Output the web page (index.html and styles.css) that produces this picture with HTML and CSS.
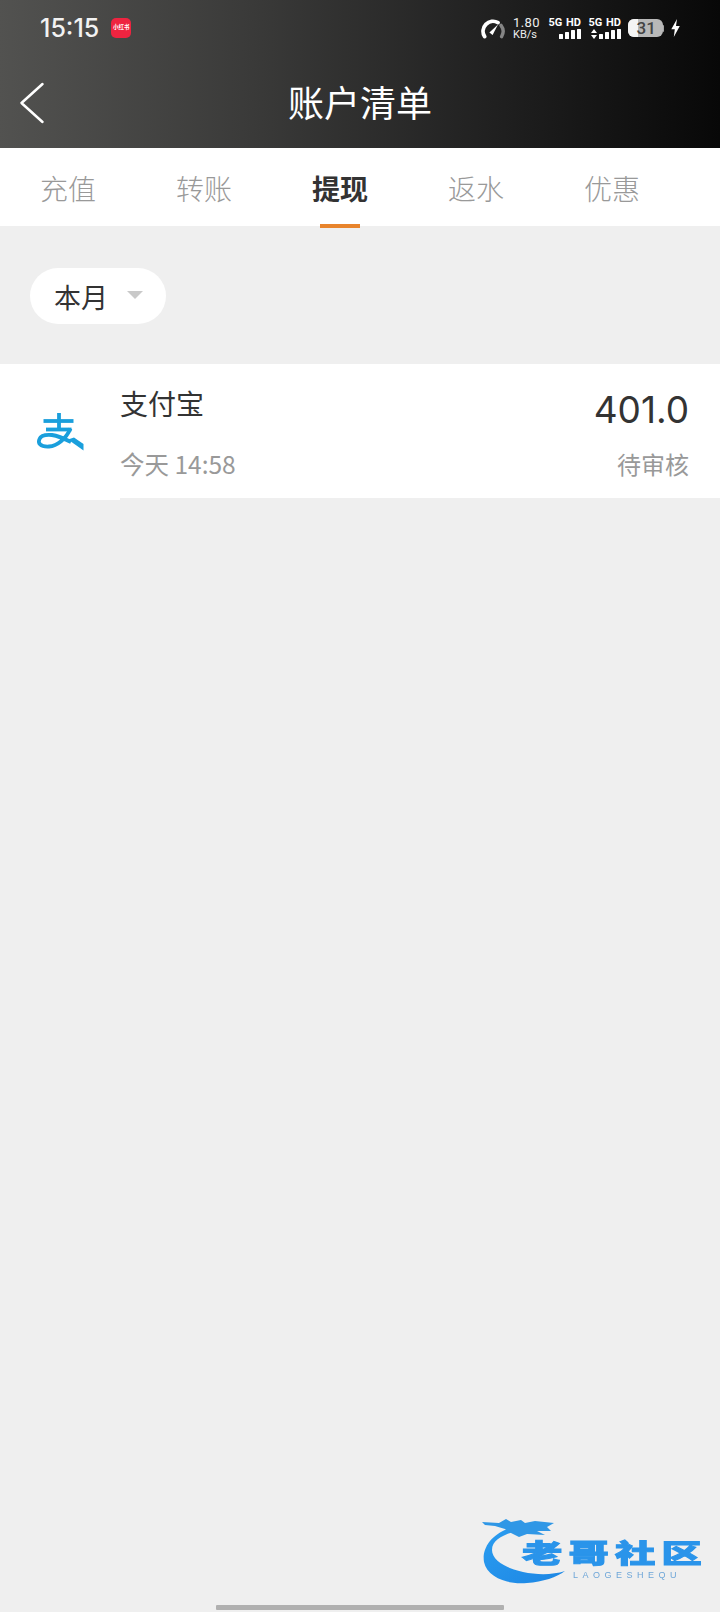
FILE: index.html
```html
<!DOCTYPE html>
<html lang="zh">
<head>
<meta charset="utf-8">
<title>账户清单</title>
<link rel="stylesheet" href="styles.css">
</head>
<body>
<div class="page">
  <header class="header">
    <div class="status">
      <div class="status-left">
        <span class="clock">15:15</span>
        <span class="app-badge"><span class="app-badge-text">小红书</span></span>
      </div>
      <div class="status-right">
        <svg class="gauge" width="24" height="21" viewBox="0 0 24 21">
          <path d="M3.6 18.6 A10 10 0 0 1 17 4.6" fill="none" stroke="#fff" stroke-width="3.8" stroke-linecap="round"/>
          <path d="M20 7.4 A10 10 0 0 1 20.6 18.6" fill="none" stroke="#858585" stroke-width="3.4" stroke-linecap="round"/>
          <path d="M8.4 14.4 L17 6.4 L11.6 17 Z" fill="#fff"/>
        </svg>
        <div class="speed"><span class="speed-num">1.80</span><span class="speed-unit">KB/s</span></div>
        <div class="sim">
          <span class="sim-label">5G HD</span>
          <div class="bars"><i class="b1"></i><i class="b2"></i><i class="b3"></i><i class="b4"></i></div>
        </div>
        <div class="sim sim-second">
          <span class="sim-label">5G HD</span>
          <div class="bars">
            <svg class="updown" width="6" height="10" viewBox="0 0 6 10"><path d="M3 0 L6 4 H0 Z M0 6 H6 L3 10 Z" fill="#fff"/></svg>
            <i class="b1"></i><i class="b2"></i><i class="b3"></i><i class="b4"></i>
          </div>
        </div>
        <div class="battery">
          <div class="battery-body"><span class="battery-level"></span><span class="battery-num">31</span></div>
          <span class="battery-nub"></span>
        </div>
        <svg class="bolt" width="9" height="18" viewBox="0 0 9 18"><path d="M6 0 L0.3 10.2 H3.8 L2.8 18 L8.8 7 H5 Z" fill="#fff"/></svg>
      </div>
    </div>
    <div class="nav">
      <svg class="back" width="26" height="42" viewBox="0 0 26 42"><path d="M23.5 2 L2.5 21 L23.5 40" fill="none" stroke="#fff" stroke-width="2.5" stroke-linecap="round" stroke-linejoin="round"/></svg>
      <h1 class="title">账户清单</h1>
    </div>
  </header>

  <nav class="tabs">
    <a class="tab">充值</a>
    <a class="tab">转账</a>
    <a class="tab active">提现</a>
    <a class="tab">返水</a>
    <a class="tab">优惠</a>
  </nav>

  <div class="filter-wrap">
    <div class="pill"><span class="pill-text">本月</span><span class="caret"></span></div>
  </div>

  <section class="row">
    <div class="row-icon">
      <svg width="60" height="50" viewBox="0 0 60 50">
        <g fill="none" stroke="#1a9fdc" stroke-width="3.8">
          <path d="M13.5 16 H43.5"/>
          <path d="M29 8 V24"/>
          <path d="M16 24.5 H41.5"/>
          <path d="M40.5 23.5 C36 34 27 41 19 41.5 C10 42 7.5 38 9.5 34 C11 30 16 29.5 22 30 C29 31 35 34 41 37"/>
        </g>
        <path d="M38 34.5 L44 32.5 L53.5 39 L53.5 45.5 Z" fill="#1a9fdc"/>
      </svg>
    </div>
    <div class="row-body">
      <div class="row-main">
        <span class="row-name">支付宝</span>
        <span class="row-amount">401.0</span>
      </div>
      <div class="row-sub">
        <span class="row-time">今天 14:58</span>
        <span class="row-status">待审核</span>
      </div>
    </div>
  </section>

  <div class="watermark">
    <svg class="dragon" width="120" height="80" viewBox="0 0 120 80">
      <defs>
        <linearGradient id="dg" x1="0" y1="0" x2="1" y2="1"><stop offset="0" stop-color="#2b9df0"/><stop offset="1" stop-color="#1c86e4"/></linearGradient>
      </defs>
      <path d="M34 18 C14 26 7 40 9 52 C12 68 35 75 52 73 C68 72 82 67 90 61 C78 65 62 65 48 62 C30 58 17 50 17 40 C17 31 26 26 38 22 Z" fill="url(#dg)"/>
      <path d="M7 12 L24 13 L31 9 L36 12 L46 10 L50 13 L60 11 L79 13 L72 17 L76 21 L62 21 L70 25 L52 24 L44 27 L36 23 L30 19 L20 16 L10 15 Z" fill="#2f97e6"/>
    </svg>
    <span class="wm-name">老哥社区</span>
    <span class="wm-latin">LAOGESHEQU</span>
  </div>
  <div class="home-bar"></div>
</div>
</body>
</html>
```

FILE: styles.css
```css
* { box-sizing: border-box; margin: 0; padding: 0; }
html, body { width: 720px; height: 1612px; overflow: hidden; }
body {
  background: #efefef;
  font-family: "Noto Sans CJK SC", "Noto Sans", sans-serif;
}
.page { position: relative; width: 720px; height: 1612px; display: flex; flex-direction: column; background: #efefef; }

.header {
  height: 148px;
  flex: none;
  background: linear-gradient(90deg, #525250 0%, #3a3a39 35%, #1f1f1f 70%, #080808 100%);
  color: #fff;
  display: flex;
  flex-direction: column;
}
.status {
  height: 56px;
  display: flex;
  justify-content: space-between;
  align-items: center;
  padding: 0 40px;
}
.status-left { display: flex; align-items: center; gap: 12px; }
.clock { font-family: Inter, Roboto, sans-serif; font-size: 25px; font-weight: 500; color: #f2f2f2; }
.app-badge {
  width: 20px; height: 20px; border-radius: 5px; background: #ee2440;
  display: flex; align-items: center; justify-content: center; overflow: hidden;
}
.app-badge-text { font-size: 5.5px; line-height: 1; color: #fff; white-space: nowrap; font-weight: 700; }
.status-right { display: flex; align-items: center; }
.gauge { margin-right: 8px; flex: none; }
.speed { display: flex; flex-direction: column; width: 24px; font-family: Roboto, sans-serif; color: #eee; line-height: 1; }
.speed-num { font-size: 13px; line-height: 12px; letter-spacing: .4px; white-space: nowrap; }
.speed-unit { font-size: 11px; line-height: 10px; margin-top: 1px; white-space: nowrap; }
.sim { display: flex; flex-direction: column; align-items: flex-end; margin-left: 12px; width: 32px; }
.sim-second { margin-left: 8px; }
.sim-label { font-family: Roboto, sans-serif; font-size: 11px; font-weight: 700; line-height: 10px; white-space: nowrap; word-spacing: 1px; }
.bars { display: flex; align-items: flex-end; gap: 2.4px; height: 10px; margin-top: 1px; }
.bars i { display: block; width: 3.6px; background: #fff; border-radius: .5px; }
.bars .b1 { height: 5px; }
.bars .b2 { height: 6.5px; }
.bars .b3 { height: 8.5px; }
.bars .b4 { height: 10px; }
.updown { margin-right: 0; }
.battery { width: 36px; height: 18px; margin-left: 7px; display: flex; align-items: center; }
.battery-body {
  position: relative;
  width: 34.5px; height: 18px;
  border-radius: 6px; background: #b8b8b8; overflow: hidden;
  display: flex; align-items: center; justify-content: center;
}
.battery-nub { width: 1.5px; height: 7px; background: #a5a5a5; border-radius: 0 1px 1px 0; }
.battery-level { position: absolute; left: 0; top: 0; bottom: 0; width: 10px; background: #f4f4f4; }
.battery-num { position: relative; font-family: Roboto, sans-serif; font-size: 17px; font-weight: 500; color: #444; line-height: 1; padding-left: 2px; }
.bolt { margin-left: 7px; flex: none; }

.nav {
  position: relative;
  flex: 1;
  display: flex;
  align-items: center;
  justify-content: center;
  padding-bottom: 2px;
}
.back { position: absolute; left: 19px; top: 26px; }
.title { font-size: 36px; font-weight: 400; line-height: 1; color: #fff; }

.tabs {
  height: 78px;
  flex: none;
  background: #fff;
  display: flex;
}
.tab {
  position: relative;
  width: 136px;
  display: flex;
  align-items: center;
  justify-content: center;
  padding-top: 2px;
  font-size: 28px;
  font-weight: 300;
  color: #999;
  line-height: 1;
}
.tab.active { color: #333; font-weight: 700; }
.tab.active::after {
  content: "";
  position: absolute;
  left: 48px; width: 40px; bottom: -2px; height: 4px;
  background: #e8842c;
}

.filter-wrap { padding: 42px 30px 40px; flex: none; }
.pill {
  width: 136px; height: 56px; border-radius: 28px; background: #fff;
  display: flex; align-items: center; padding-left: 24px;
}
.pill-text { font-size: 27px; color: #333; line-height: 1; }
.caret {
  width: 0; height: 0; margin-left: 19px; margin-top: -2px;
  border-left: 8px solid transparent; border-right: 8px solid transparent; border-top: 8px solid #c9c9c9;
}

.row { height: 136px; flex: none; background: #fff; display: flex; }
.row-icon { width: 120px; flex: none; display: flex; align-items: center; justify-content: center; padding-bottom: 4px; }
.row-body {
  flex: 1; padding: 22px 31px 0 0; display: flex; flex-direction: column;
  border-bottom: 2px solid #efefef;
}
.row-main { display: flex; justify-content: space-between; align-items: center; height: 44px; }
.row-sub { display: flex; justify-content: space-between; align-items: center; height: 34px; margin-top: 17px; }
.row-name { font-size: 28px; color: #333; line-height: 1; margin-top: -10px; }
.row-amount { font-family: Inter, Roboto, sans-serif; font-size: 37px; color: #333; line-height: 1; margin-top: 3px; }
.row-time { font-size: 24.5px; color: #999; line-height: 1; }
.row-status { font-size: 24px; color: #999; line-height: 1; }

.watermark { position: absolute; left: 475px; top: 1510px; width: 235px; height: 80px; filter: blur(.5px); }
.dragon { position: absolute; left: 0; top: 0; }
.wm-name {
  position: absolute; left: 47px; top: 29px;
  font-size: 26px; font-weight: 900; line-height: 26px; letter-spacing: 4px;
  white-space: nowrap;
  color: #2a94ea;
  -webkit-text-stroke: 1px #2a94ea;
  transform: scaleX(1.55);
  transform-origin: left center;
}
.wm-latin {
  position: absolute; left: 98px; top: 61px;
  font-family: "Liberation Sans", sans-serif;
  font-size: 9px; line-height: 9px; letter-spacing: 4.5px; color: #6ea6d8;
  white-space: nowrap;
}
.home-bar { position: absolute; left: 216px; top: 1605px; width: 288px; height: 5px; background: #b0b0b0; border-radius: 1px; }
```
